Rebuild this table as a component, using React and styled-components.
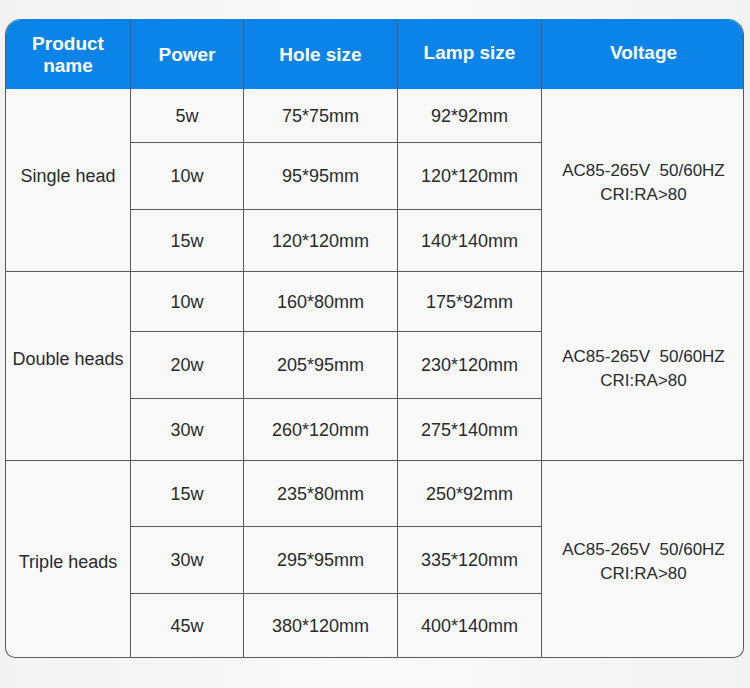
import React from 'react';
import styled, { createGlobalStyle } from 'styled-components';

const GlobalStyle = createGlobalStyle`
  body {
    margin: 0;
    background: linear-gradient(90deg, #f3f3f3 0%, #fafafa 50%, #f3f3f3 100%);
    font-family: 'Liberation Sans', Arial, sans-serif;
  }
`;

const Page = styled.div`
  width: 750px;
  height: 688px;
  padding: 19px 0 0 5px;
  box-sizing: border-box;
`;

const Table = styled.div`
  display: grid;
  width: 739px;
  grid-template-columns: 125px 113px 154px 144px 203px;
  grid-template-rows: 69px 54px 67px 62px 60px 67px 62px 66px 67px 63px;
  border: 1px solid #5a5a5a;
  border-top-color: #0a84e8;
  border-radius: 16px 16px 10px 10px;
  overflow: hidden;
  background: #f9f9f9;
  box-sizing: border-box;
`;

const Head = styled.div`
  display: flex;
  align-items: center;
  justify-content: center;
  text-align: center;
  background: #0a84e8;
  color: #fff;
  font-weight: bold;
  font-size: 19px;
  line-height: 22px;
  border-right: ${p => (p.$last ? 'none' : '1px solid #4a5a6a')};
  padding-bottom: ${p => (p.$raised ? '4px' : '0')};
`;

const Cell = styled.div`
  display: flex;
  align-items: center;
  justify-content: center;
  text-align: center;
  color: #2a2a2a;
  font-size: 18px;
  line-height: 24px;
  border-right: ${p => (p.$last ? 'none' : '1px solid #5a5a5a')};
  border-bottom: ${p => (p.$bottom ? 'none' : '1px solid #5a5a5a')};
  grid-row: ${p => (p.$span ? `span ${p.$span}` : 'auto')};
  padding-top: ${p => (p.$shift > 0 ? `${p.$shift}px` : '0')};
  padding-bottom: ${p => (p.$shift < 0 ? `${-p.$shift}px` : '0')};
`;

const Volt = styled(Cell)`
  font-size: 17px;
  line-height: 24px;
  white-space: pre;
`;

const groups = [
  {
    name: 'Single head',
    shift: -9,
    rows: [
      ['5', '75*75mm', '92*92mm'],
      ['10', '95*95mm', '120*120mm'],
      ['15', '120*120mm', '140*140mm'],
    ],
  },
  {
    name: 'Double heads',
    shift: -14,
    rows: [
      ['10', '160*80mm', '175*92mm'],
      ['20', '205*95mm', '230*120mm'],
      ['30', '260*120mm', '275*140mm'],
    ],
  },
  {
    name: 'Triple heads',
    shift: 5,
    rows: [
      ['15', '235*80mm', '250*92mm'],
      ['30', '295*95mm', '335*120mm'],
      ['45', '380*120mm', '400*140mm'],
    ],
  },
];

export default function App() {
  return (
    <Page>
      <GlobalStyle />
      <Table>
        <Head>Product<br />name</Head>
        <Head>Power</Head>
        <Head>Hole size</Head>
        <Head $raised>Lamp size</Head>
        <Head $last $raised>Voltage</Head>
        {groups.map((g, gi) => {
          const lastGroup = gi === groups.length - 1;
          return g.rows.map((r, ri) => {
            const lastRow = lastGroup && ri === g.rows.length - 1;
            return (
              <React.Fragment key={`${gi}-${ri}`}>
                {ri === 0 && (
                  <Cell $span={3} $bottom={lastGroup} $shift={g.shift}>
                    {g.name}
                  </Cell>
                )}
                <Cell $bottom={lastRow}>{r[0]}w</Cell>
                <Cell $bottom={lastRow}>{r[1]}</Cell>
                <Cell $bottom={lastRow}>{r[2]}</Cell>
                {ri === 0 && (
                  <Volt $span={3} $last $bottom={lastGroup} $shift={5}>
                    {'AC85-265V  50/60HZ\nCRI:RA>80'}
                  </Volt>
                )}
              </React.Fragment>
            );
          });
        })}
      </Table>
    </Page>
  );
}
